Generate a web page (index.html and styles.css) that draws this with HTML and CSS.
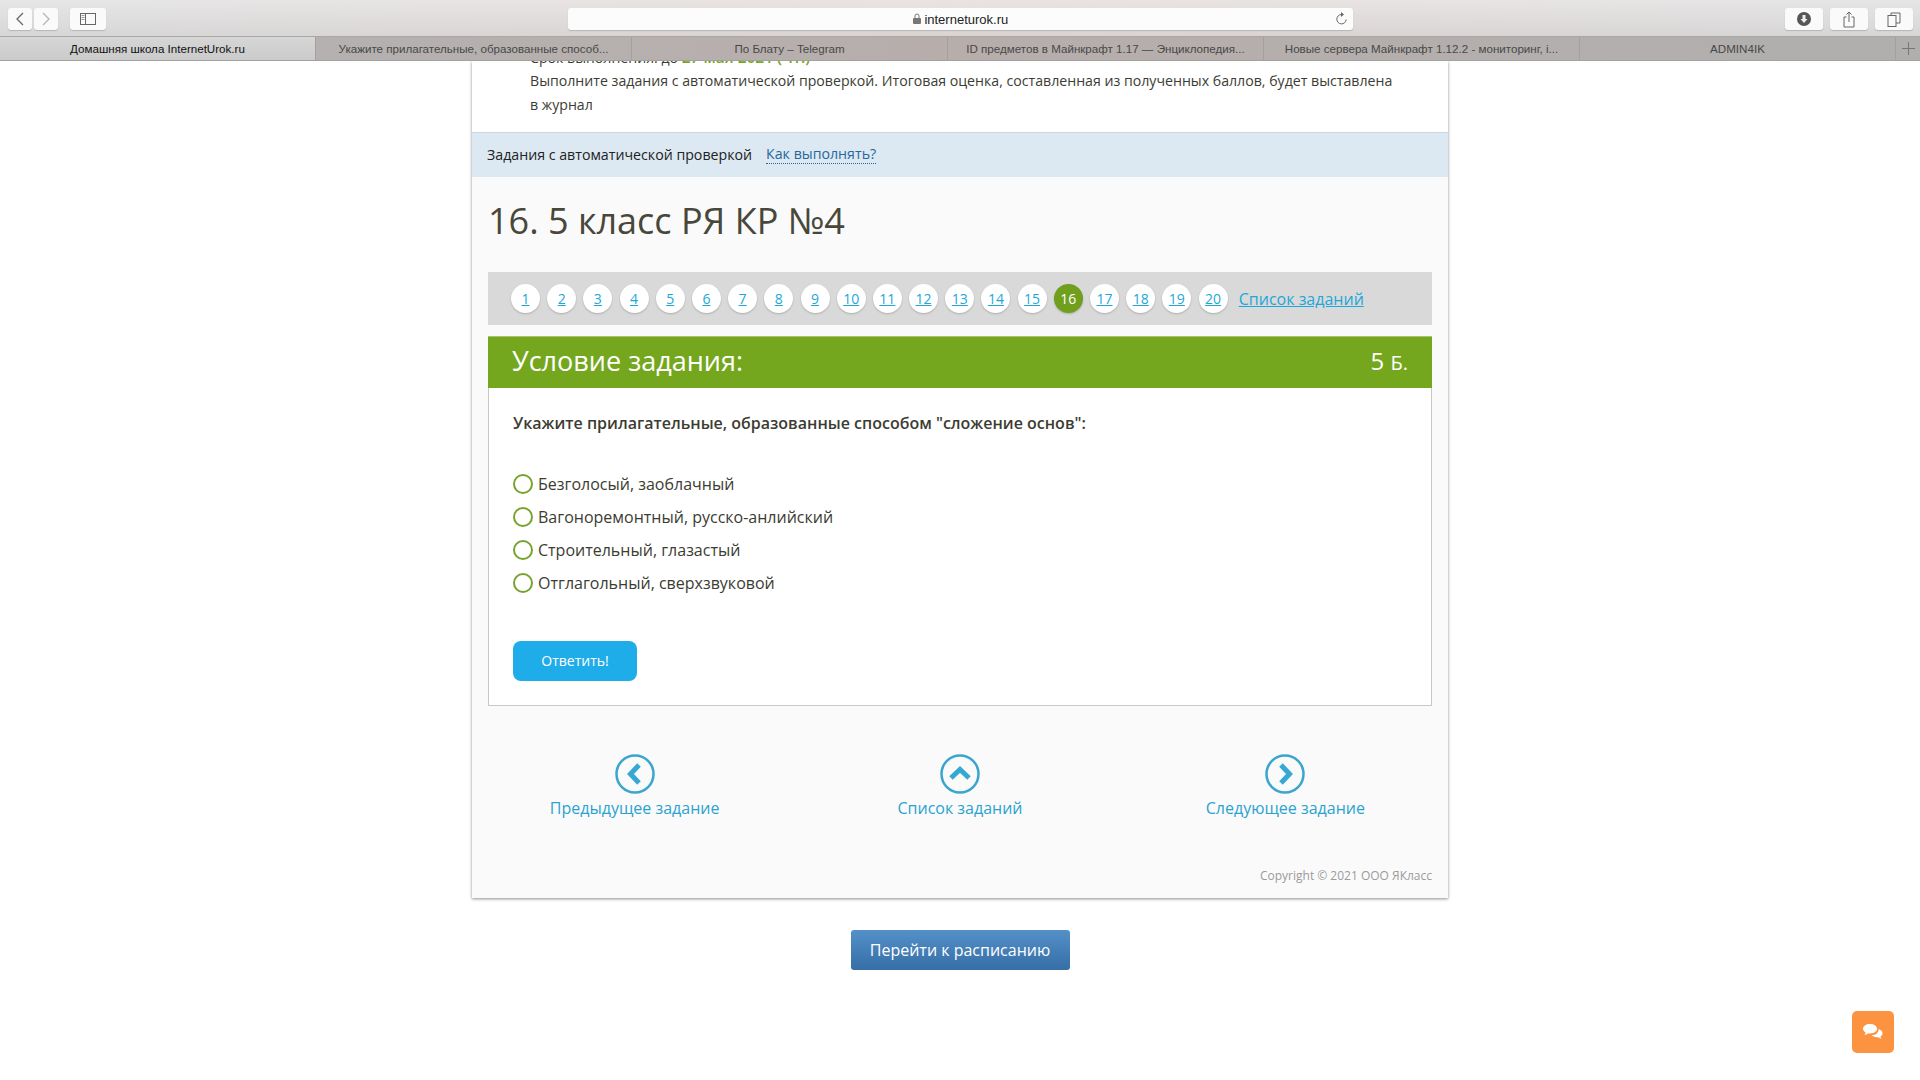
FILE: index.html
```html
<!DOCTYPE html>
<html lang="ru">
  <head>
    <meta charset="UTF-8" />
    <title>Домашняя школа InternetUrok.ru</title>
    <link rel="stylesheet" href="styles.css">
  </head>
  <body>
    <header class="browser">
      <div class="toolbar">
        <div class="btn-group">
          <span class="tool tool-nav">
            <svg width="10" height="16" viewBox="0 0 10 16"><path d="M8 2L2 8l6 6" fill="none" stroke="#666" stroke-width="1.3"/></svg>
          </span>
          <span class="tool tool-nav">
            <svg width="10" height="16" viewBox="0 0 10 16"><path d="M2 2l6 6-6 6" fill="none" stroke="#b5b5b5" stroke-width="1.3"/></svg>
          </span>
        </div>
        <span class="tool tool-side">
          <svg width="16" height="12" viewBox="0 0 16 12"><rect x="0.5" y="0.5" width="15" height="11" fill="none" stroke="#666"/><path d="M5.5 0.5v11" stroke="#666"/><path d="M1.5 2.5h3M1.5 4.5h3M1.5 6.5h3" stroke="#999"/></svg>
        </span>
        <div class="address">
          <span class="address-text">
            <svg width="8" height="11" viewBox="0 0 8 11"><path d="M2 5V3a2 2 0 0 1 4 0v2" fill="none" stroke="#777"/><rect y="5" width="8" height="6" rx="1" fill="#777"/></svg>
            interneturok.ru
          </span>
          <svg class="reload" width="12" height="14" viewBox="0 0 12 14"><path d="M6.5 2.5a4.7 4.7 0 1 0 4.7 5" fill="none" stroke="#666"/><path d="M6 0l3 2.5L6 5z" fill="#666"/></svg>
        </div>
        <div class="tools-right">
          <span class="tool tool-right">
            <svg width="14" height="14" viewBox="0 0 14 14"><circle cx="7" cy="7" r="7" fill="#555"/><path d="M5.5 3h3v4h2L7 11 3.500 7h2z" fill="#eee"/></svg>
          </span>
          <span class="tool tool-right">
            <svg width="12" height="17" viewBox="0 0 12 17"><path d="M3.500 6H1v10h10V6H8.500M6 11V1M3.500 3.500L6 1l2.500 2.500" fill="none" stroke="#666"/></svg>
          </span>
          <span class="tool tool-right">
            <svg width="14" height="15" viewBox="0 0 14 15"><rect x="1" y="3.500" width="8" height="11" fill="none" stroke="#666"/><path d="M4 3.500V1h9v10h-4" fill="none" stroke="#666"/></svg>
          </span>
        </div>
      </div>
      <div class="tabs">
        <div class="tab tab-active">Домашняя школа InternetUrok.ru</div>
        <div class="tab">Укажите прилагательные, образованные способ...</div>
        <div class="tab">По Блату – Telegram</div>
        <div class="tab">ID предметов в Майнкрафт 1.17 — Энциклопедия...</div>
        <div class="tab">Новые сервера Майнкрафт 1.12.2 - мониторинг, i...</div>
        <div class="tab">ADMIN4IK</div>
        <div class="tab-plus">
          <svg width="13" height="13" viewBox="0 0 13 13"><path d="M6.500 0v13M0 6.500h13" stroke="#777"/></svg>
        </div>
      </div>
    </header>

    <main class="page">
      <section class="card">
        <div class="intro">
          <p class="deadline">Срок выполнения: до <span class="deadline-date">27 мая 2021 (Чт.)</span></p>
          <p>Выполните задания с автоматической проверкой. Итоговая оценка, составленная из полученных баллов, будет выставлена в журнал</p>
        </div>
        <div class="infobar">
          <span>Задания с автоматической проверкой</span>
          <a class="howto" href="#">Как выполнять?</a>
        </div>
        <div class="content">
          <h1>16. 5 класс РЯ КР №4</h1>
          <nav class="pager">
            <a href="#">1</a><a href="#">2</a><a href="#">3</a><a href="#">4</a><a href="#">5</a>
            <a href="#">6</a><a href="#">7</a><a href="#">8</a><a href="#">9</a><a href="#">10</a>
            <a href="#">11</a><a href="#">12</a><a href="#">13</a><a href="#">14</a><a href="#">15</a>
            <a href="#" class="current">16</a><a href="#">17</a><a href="#">18</a><a href="#">19</a><a href="#">20</a>
            <a href="#" class="pager-list">Список заданий</a>
          </nav>
          <div class="task">
            <div class="task-head">
              <h2>Условие задания:</h2>
              <span class="score">5 <small>Б.</small></span>
            </div>
            <div class="task-body">
              <p class="question">Укажите прилагательные, образованные способом "сложение основ":</p>
              <ul class="options">
                <li><span class="radio"></span>Безголосый, заоблачный</li>
                <li><span class="radio"></span>Вагоноремонтный, русско-анлийский</li>
                <li><span class="radio"></span>Строительный, глазастый</li>
                <li><span class="radio"></span>Отглагольный, сверхзвуковой</li>
              </ul>
              <button class="answer">Ответить!</button>
            </div>
          </div>
          <div class="task-nav">
            <a href="#">
              <svg width="40" height="40" viewBox="0 0 40 40"><circle cx="20" cy="20" r="18.500" fill="none" stroke="#3aa6cf" stroke-width="2.500"/><path d="M24 11l-8.500 9 8.500 9" fill="none" stroke="#35a8d4" stroke-width="5"/></svg>
              Предыдущее задание
            </a>
            <a href="#">
              <svg width="40" height="40" viewBox="0 0 40 40"><circle cx="20" cy="20" r="18.500" fill="none" stroke="#3aa6cf" stroke-width="2.500"/><path d="M11 24l9-8.500 9 8.500" fill="none" stroke="#35a8d4" stroke-width="5"/></svg>
              Список заданий
            </a>
            <a href="#">
              <svg width="40" height="40" viewBox="0 0 40 40"><circle cx="20" cy="20" r="18.500" fill="none" stroke="#3aa6cf" stroke-width="2.500"/><path d="M16 11l8.500 9-8.500 9" fill="none" stroke="#35a8d4" stroke-width="5"/></svg>
              Следующее задание
            </a>
          </div>
          <p class="copyright">Copyright © 2021 ООО ЯКласс</p>
        </div>
      </section>
      <a class="schedule" href="#">Перейти к расписанию</a>
    </main>

    <a class="chat" href="#">
      <svg width="24" height="20" viewBox="0 0 24 20">
        <path d="M9 2c3.900 0 7 2.100 7 4.800S12.900 11.500 9 11.500c-.7 0-1.300-.1-1.900-.2C6 12.300 4.700 12.800 3.400 13c.7-.7 1.100-1.600 1.200-2.500C3 9.600 2 8.300 2 6.800 2 4.100 5.100 2 9 2z" fill="#fff"/>
        <path d="M17.500 7c2.400.7 4 2.300 4 4.200 0 1.300-.8 2.500-2 3.300.1.800.4 1.600 1 2.200-1.100-.2-2.200-.6-3.100-1.500-.5.100-1 .1-1.500.1-2.300 0-4.200-.9-5.200-2.200 4.300 0 7.300-2.400 6.800-6.100z" fill="#fff"/>
      </svg>
    </a>
  </body>
</html>
```
FILE: styles.css
```css
* {
  margin: 0px;
  box-sizing: border-box;
}

body {
  height: 1080px;
  overflow: hidden;
  background-color: white;
  font-family: "Open Sans", "Noto Sans", sans-serif;
  color: #3c3c32;
}

a {
  color: #1ea7d8;
}

/* browser window */
.browser {
  position: relative;
  z-index: 2;
  font-family: "Liberation Sans", sans-serif;
}

.toolbar {
  height: 37px;
  padding: 8px 7px 0px 8px;
  display: flex;
  align-items: flex-start;
  border-bottom: 1px solid #a9a7a6;
  background: linear-gradient(rgba(255, 255, 255, 0.2), rgba(0, 0, 0, 0.04)),
    linear-gradient(90deg, #e0e0e0, #e4dcda 50%, #dfdfdf);
}

.btn-group {
  display: flex;
  gap: 2px;
}

.tool {
  height: 22px;
  display: flex;
  align-items: center;
  justify-content: center;
  border-radius: 3px;
  background-color: #fafafa;
  box-shadow: 0px 1px 1px #b5b5b5;
}

.tool-nav {
  width: 24px;
}

.tool-side {
  width: 36px;
  margin-left: 12px;
}

.address {
  width: 785px;
  height: 22px;
  margin-left: 462px;
  padding-right: 6px;
  display: flex;
  align-items: center;
  justify-content: flex-end;
  position: relative;
  border-radius: 3px;
  background-color: #fcfcfc;
  box-shadow: 0px 1px 1px #b5b5b5;
  font-size: 13px;
  color: #222;
}

.address-text {
  position: absolute;
  left: 0;
  right: 0;
  text-align: center;
}

.reload {
  position: relative;
}

.tools-right {
  margin-left: auto;
  display: flex;
  gap: 7px;
}

.tool-right {
  width: 38px;
}

.tabs {
  height: 24px;
  display: flex;
  border-bottom: 1px solid #a3a1a0;
  background: linear-gradient(90deg, #b3b2b1, #b7aeac 50%, #b0afae);
  font-size: 11.600px;
  color: #484848;
}

.tab {
  width: 316px;
  display: flex;
  align-items: center;
  justify-content: center;
  white-space: nowrap;
  overflow: hidden;
  border-right: 1px solid #a3a1a0;
}

.tab-active {
  background: linear-gradient(#d6d6d6, #cbcbcb);
  color: #111;
}

.tab-plus {
  flex: 1;
  display: flex;
  align-items: center;
  justify-content: center;
}

/* page */
.page {
  display: flex;
  flex-direction: column;
  align-items: center;
}

.card {
  width: 976px;
  background-color: #fafafa;
  box-shadow: 0px 1px 3px rgba(0, 0, 0, 0.45);
}

.intro {
  height: 71px;
  padding: 0px 52px 0px 58px;
  background-color: white;
  font-size: 14.150px;
  line-height: 24.500px;
  overflow: hidden;
}

.intro p {
  position: relative;
  top: -18px;
}

.intro .deadline {
  top: -16px;
}

.deadline-date {
  color: #74a71e;
  font-size: 15.500px;
  font-weight: 600;
}

.infobar {
  height: 45px;
  padding: 0px 15px 2px;
  display: flex;
  align-items: center;
  gap: 14px;
  border-top: 1px solid #cfd6da;
  background-color: #dce9f2;
  font-size: 14.200px;
  color: #222;
}

.howto {
  color: #27679a;
  text-decoration: none;
  border-bottom: 1px dotted #27679a;
  line-height: 19px;
}

.content {
  padding: 0px 16px;
}

h1 {
  height: 95px;
  padding-top: 19px;
  font-size: 36px;
  line-height: 50px;
  font-weight: 400;
  color: #47473a;
}

.pager {
  height: 53px;
  padding-left: 23px;
  display: flex;
  align-items: center;
  gap: 7.200px;
  background-color: #d9d9d9;
  font-size: 14px;
}

.pager a {
  width: 29px;
  height: 29px;
  display: flex;
  align-items: center;
  justify-content: center;
  border-radius: 50%;
  background-color: white;
  box-shadow: 0px 1px 2px rgba(0, 0, 0, 0.2);
}

.pager a.current {
  background-color: #6f9f1c;
  color: white;
  text-decoration: none;
}

.pager a.pager-list {
  width: auto;
  height: auto;
  margin-left: 4px;
  background: none;
  box-shadow: none;
  font-size: 16px;
}

.task {
  margin-top: 11px;
  background-color: white;
  border: 1px solid #c8c8c8;
  border-top: 0;
}

.task-head {
  height: 52px;
  margin: 0px -1px;
  padding: 0px 24px 4px;
  display: flex;
  align-items: center;
  justify-content: space-between;
  background-color: #74a71e;
  border-top: 1px solid #a9c36f;
  color: white;
}

h2 {
  font-size: 27px;
  font-weight: 400;
}

.score {
  font-size: 24px;
}

.score small {
  font-size: 20px;
}

.task-body {
  padding: 23px 24px 24px;
}

.question {
  font-size: 16px;
  line-height: 24px;
  font-weight: 600;
}

.options {
  margin-top: 32px;
  padding: 0;
  list-style: none;
  font-size: 16px;
}

.options li {
  height: 33px;
  display: flex;
  align-items: center;
  gap: 5px;
}

.radio {
  width: 20px;
  height: 20px;
  border: 2px solid #78a22f;
  border-radius: 50%;
}

.answer {
  width: 124px;
  height: 40px;
  margin-top: 42px;
  padding-bottom: 3px;
  display: block;
  border: 0;
  border-radius: 8px;
  background-color: #1fadea;
  color: white;
  font-family: inherit;
  font-size: 14px;
}

.task-nav {
  height: 160px;
  margin: 0px -16px;
  padding-top: 48px;
  display: grid;
  grid-template-columns: 1fr 1fr 1fr;
}

.task-nav a {
  display: flex;
  flex-direction: column;
  align-items: center;
  gap: 3px;
  text-decoration: none;
  font-size: 16px;
  color: #2ba3d0;
}

.copyright {
  padding-bottom: 12px;
  text-align: right;
  font-size: 12px;
  line-height: 20px;
  color: #9a9a9a;
}

.schedule {
  width: 219px;
  height: 40px;
  margin-top: 32px;
  display: flex;
  align-items: center;
  justify-content: center;
  border-radius: 3px;
  background: linear-gradient(#5490c8, #366ea6);
  color: white;
  text-decoration: none;
  font-size: 16px;
}

.chat {
  position: fixed;
  right: 26px;
  bottom: 27px;
  width: 42px;
  height: 42px;
  display: flex;
  align-items: center;
  justify-content: center;
  border-radius: 5px;
  background-color: #fb9340;
}
```
